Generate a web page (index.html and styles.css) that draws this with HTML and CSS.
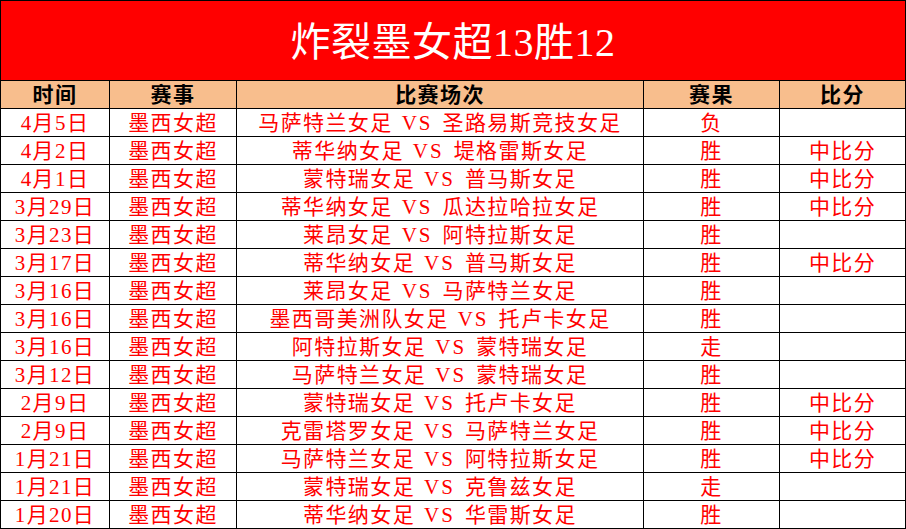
FILE: index.html
```html
<!DOCTYPE html>
<html lang="zh-CN">
<head>
<meta charset="utf-8">
<title>炸裂墨女超13胜12</title>
<link rel="stylesheet" href="styles.css">
</head>
<body>
<div class="sheet">
  <div class="title">炸裂墨女超13胜12</div>
  <div class="cell head">时间</div>
  <div class="cell head">赛事</div>
  <div class="cell head">比赛场次</div>
  <div class="cell head">赛果</div>
  <div class="cell head">比分</div>

  <div class="cell">4月5日</div><div class="cell">墨西女超</div><div class="cell">马萨特兰女足<span class="vs">VS</span>圣路易斯竞技女足</div><div class="cell">负</div><div class="cell"></div>
  <div class="cell">4月2日</div><div class="cell">墨西女超</div><div class="cell">蒂华纳女足<span class="vs">VS</span>堤格雷斯女足</div><div class="cell">胜</div><div class="cell">中比分</div>
  <div class="cell">4月1日</div><div class="cell">墨西女超</div><div class="cell">蒙特瑞女足<span class="vs">VS</span>普马斯女足</div><div class="cell">胜</div><div class="cell">中比分</div>
  <div class="cell">3月29日</div><div class="cell">墨西女超</div><div class="cell">蒂华纳女足<span class="vs">VS</span>瓜达拉哈拉女足</div><div class="cell">胜</div><div class="cell">中比分</div>
  <div class="cell">3月23日</div><div class="cell">墨西女超</div><div class="cell">莱昂女足<span class="vs">VS</span>阿特拉斯女足</div><div class="cell">胜</div><div class="cell"></div>
  <div class="cell">3月17日</div><div class="cell">墨西女超</div><div class="cell">蒂华纳女足<span class="vs">VS</span>普马斯女足</div><div class="cell">胜</div><div class="cell">中比分</div>
  <div class="cell">3月16日</div><div class="cell">墨西女超</div><div class="cell">莱昂女足<span class="vs">VS</span>马萨特兰女足</div><div class="cell">胜</div><div class="cell"></div>
  <div class="cell">3月16日</div><div class="cell">墨西女超</div><div class="cell">墨西哥美洲队女足<span class="vs">VS</span>托卢卡女足</div><div class="cell">胜</div><div class="cell"></div>
  <div class="cell">3月16日</div><div class="cell">墨西女超</div><div class="cell">阿特拉斯女足<span class="vs">VS</span>蒙特瑞女足</div><div class="cell">走</div><div class="cell"></div>
  <div class="cell">3月12日</div><div class="cell">墨西女超</div><div class="cell">马萨特兰女足<span class="vs">VS</span>蒙特瑞女足</div><div class="cell">胜</div><div class="cell"></div>
  <div class="cell">2月9日</div><div class="cell">墨西女超</div><div class="cell">蒙特瑞女足<span class="vs">VS</span>托卢卡女足</div><div class="cell">胜</div><div class="cell">中比分</div>
  <div class="cell">2月9日</div><div class="cell">墨西女超</div><div class="cell">克雷塔罗女足<span class="vs">VS</span>马萨特兰女足</div><div class="cell">胜</div><div class="cell">中比分</div>
  <div class="cell">1月21日</div><div class="cell">墨西女超</div><div class="cell">马萨特兰女足<span class="vs">VS</span>阿特拉斯女足</div><div class="cell">胜</div><div class="cell">中比分</div>
  <div class="cell">1月21日</div><div class="cell">墨西女超</div><div class="cell">蒙特瑞女足<span class="vs">VS</span>克鲁兹女足</div><div class="cell">走</div><div class="cell"></div>
  <div class="cell">1月20日</div><div class="cell">墨西女超</div><div class="cell">蒂华纳女足<span class="vs">VS</span>华雷斯女足</div><div class="cell">胜</div><div class="cell"></div>
</div>
</body>
</html>
```

FILE: styles.css
```css
html, body {
  margin: 0;
  padding: 0;
  background: #ffffff;
}

.sheet {
  display: grid;
  grid-template-columns: 109px 127px 407px 136px 126px;
  grid-template-rows: 80px;
  grid-auto-rows: 28px;
  width: 906px;
  box-sizing: border-box;
  border-left: 1px solid #000;
  border-top: 1px solid #000;
  font-family: "Liberation Serif", "Noto Sans CJK SC", serif;
}

.title {
  grid-column: 1 / -1;
  box-sizing: border-box;
  background: #ff0000;
  color: #ffffff;
  border-right: 1px solid #000;
  border-bottom: 1px solid #000;
  display: flex;
  align-items: center;
  justify-content: center;
  font-size: 40px;
  line-height: 1;
  padding-top: 4px;
  letter-spacing: 0.5px;
}

.cell {
  box-sizing: border-box;
  border-right: 1px solid #000;
  border-bottom: 1px solid #000;
  display: flex;
  align-items: center;
  justify-content: center;
  color: #ff0000;
  font-size: 21px;
  letter-spacing: 1.4px;
  white-space: nowrap;
  line-height: 1;
  padding-top: 2px;
}

.vs {
  margin: 0 10px 0 9px;
  letter-spacing: 2px;
}

.head {
  background: #f8be8d;
  color: #000000;
  font-weight: bold;
}
```
